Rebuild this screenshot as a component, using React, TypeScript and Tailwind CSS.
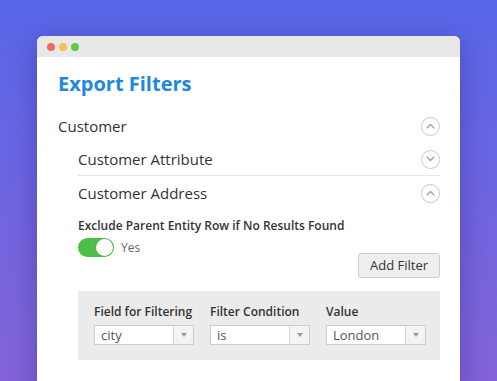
import React from "react";

type ChevronProps = { up?: boolean };

// small circled chevron used on accordion rows
function CircleChevron({ up }: ChevronProps) {
  return (
    <div className="flex h-[19px] w-[19px] items-center justify-center rounded-full border border-[#c9c9c9]">
      <svg width="9" height="6" viewBox="0 0 9 6" fill="none">
        <path
          d={up ? "M1 5 L4.5 1.5 L8 5" : "M1 1 L4.5 4.5 L8 1"}
          stroke="#9a9a9a"
          strokeWidth="1.1"
          strokeLinecap="round"
          strokeLinejoin="round"
        />
      </svg>
    </div>
  );
}

function Select({ value }: { value: string }) {
  return (
    <div className="flex h-[20px] w-[100px] border border-[#cdcdcd] bg-white">
      <div className="flex flex-1 items-center pl-[6px] text-[13px] leading-none text-[#555]">{value}</div>
      <div className="flex w-[20px] items-center justify-center border-l border-[#d6d6d6] bg-[#f4f4f4]">
        <svg width="6" height="4" viewBox="0 0 6 4">
          <path d="M0 0 L6 0 L3 4 Z" fill="#9b9b9b" />
        </svg>
      </div>
    </div>
  );
}

const filters = [
  { label: "Field for Filtering", value: "city" },
  { label: "Filter Condition", value: "is" },
  { label: "Value", value: "London" },
];

export default function App() {
  return (
    <div
      className="h-[381px] w-[497px] overflow-hidden bg-gradient-to-b from-[#5767e9] to-[#8363d8] pl-[37px] pt-[36px]"
      style={{ fontFamily: '"Open Sans", "Noto Sans", sans-serif' }}
    >
      <div className="h-[360px] w-[423px] overflow-hidden rounded-t-[6px] bg-white shadow-[0_6px_28px_rgba(30,20,110,0.35)]">
        {/* Title bar */}
        <div className="flex h-[21px] items-center gap-[4px] bg-[#e8e8e8] pl-[10px]">
          <span className="h-[8px] w-[8px] rounded-full bg-[#ee6a5f]" />
          <span className="h-[8px] w-[8px] rounded-full bg-[#f5c34f]" />
          <span className="h-[8px] w-[8px] rounded-full bg-[#5dc94f]" />
        </div>

        <div className="pl-[21px] pr-[20px] pt-[13px]">
          <h1 className="text-[20px] font-bold leading-[28px] text-[#1e87e0]">Export Filters</h1>

          <div className="mt-[11px] flex h-[34px] items-center justify-between text-[15px] text-[#333]">
            <span>Customer</span>
            <CircleChevron up />
          </div>

          <div className="pl-[20px]">
            <div className="flex h-[33px] items-center justify-between border-b border-[#e6e6e6] text-[15px] font-medium text-[#333]">
              <span>Customer Attribute</span>
              <CircleChevron />
            </div>
            <div className="flex h-[34px] items-center justify-between text-[15px] font-medium text-[#333]">
              <span>Customer Address</span>
              <CircleChevron up />
            </div>

            <div className="mt-[8px] text-[12px] font-semibold leading-[16px] text-[#333]">
              Exclude Parent Entity Row if No Results Found
            </div>

            <div className="mt-[4px] flex items-start justify-between">
              <div className="flex items-center gap-[7px]">
                <div className="flex h-[19px] w-[36px] items-center justify-end rounded-full bg-[#4bbf47] p-[1px]">
                  <div className="h-[17px] w-[17px] rounded-full bg-white shadow-[0_0_0_1px_rgba(0,0,0,0.08)]" />
                </div>
                <span className="text-[12px] text-[#666]">Yes</span>
              </div>
              <button className="mt-[15px] h-[25px] w-[82px] rounded-[3px] border border-[#cccccc] bg-[#eeeeee] text-[13px] text-[#333]">
                Add Filter
              </button>
            </div>

            <div className="mt-[13px] flex gap-[16px] bg-[#ebebeb] pb-[15px] pl-[16px] pt-[13px]">
              {filters.map((f) => (
                <div key={f.label} className="flex flex-col gap-[5px]">
                  <span className="text-[12px] font-semibold leading-[16px] text-[#333]">{f.label}</span>
                  <Select value={f.value} />
                </div>
              ))}
            </div>
          </div>
        </div>
      </div>
    </div>
  );
}
